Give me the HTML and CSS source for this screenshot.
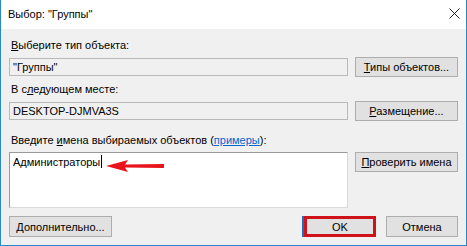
FILE: index.html
```html
<!DOCTYPE html>
<html lang="ru">
<head>
    <meta charset="UTF-8">
    <title>Выбор: "Группы"</title>
    <link rel="stylesheet" href="styles.css">
</head>
<body>
    <div class="window">
        <div class="titlebar">
            <span class="title">Выбор: "Группы"</span>
            <svg class="close" width="11" height="11" viewBox="0 0 11 11">
                <path d="M0.5 0.5 L10.5 10.5 M10.5 0.5 L0.5 10.5" stroke="#222" stroke-width="1" fill="none"/>
            </svg>
        </div>

        <div class="content">
            <div class="label"><u>В</u>ыберите тип объекта:</div>
            <div class="row first">
                <div class="field readonly">"Группы"</div>
                <button class="btn"><u>Т</u>ипы объектов...</button>
            </div>

            <div class="label">В с<u>л</u>едующем месте:</div>
            <div class="row">
                <div class="field readonly">DESKTOP-DJMVA3S</div>
                <button class="btn"><u>Р</u>азмещение...</button>
            </div>

            <div class="label">Введите <u>и</u>мена выбираемых объектов (<a href="#" class="link">примеры</a>):</div>
            <div class="row">
                <div class="field area">Администраторы<span class="caret"></span>
                    <svg class="arrow" width="62" height="16" viewBox="0 0 62 16">
                        <path d="M2 8 L24 2 L21 6.5 L60 6 L60 10 L21 9.5 L24 14 Z" fill="#e8141b"/>
                    </svg>
                </div>
                <button class="btn"><u>П</u>роверить имена</button>
            </div>

            <div class="footer">
                <button class="btn wide"><u>Д</u>ополнительно...</button>
                <div class="footer-right">
                    <button class="btn ok">OK</button>
                    <button class="btn">Отмена</button>
                </div>
            </div>
        </div>
    </div>
</body>
</html>
```

FILE: styles.css
```css
* {
    margin: 0;
    padding: 0;
    box-sizing: border-box;
}

body {
    width: 467px;
    height: 246px;
    overflow: hidden;
    font-family: 'Liberation Sans', Arial, sans-serif;
    font-size: 11px;
    color: #000;
    background: #f0f0f0;
}

.window {
    width: 467px;
    height: 246px;
    border: 1px solid #2b88c8;
    border-top: none;
    background: #f0f0f0;
    display: flex;
    flex-direction: column;
}

.titlebar {
    height: 29px;
    background: #fff;
    display: flex;
    align-items: center;
    justify-content: space-between;
    padding: 0 6px 2px 7px;
}

.title {
    font-size: 11px;
}

.content {
    padding: 7px 8px 0 8px;
    display: flex;
    flex-direction: column;
}

.label {
    height: 16px;
    line-height: 16px;
    margin-top: 1px;
    margin-bottom: 4px;
    padding-left: 2px;
    white-space: nowrap;
}

.label u, .btn u {
    text-decoration: underline;
    text-underline-offset: 1px;
}

.link {
    color: #0066cc;
}

.row {
    display: flex;
    justify-content: space-between;
    align-items: flex-start;
    margin-bottom: 10px;
}

.row.first {
    margin-bottom: 3px;
}

.field {
    width: 339px;
    height: 18px;
    border: 1px solid #a0a0a0;
    padding: 0 3px;
    line-height: 16px;
    white-space: nowrap;
}

.readonly {
    background: #f0f0f0;
    border-color: #b9b9b9;
    margin-top: 1px;
}

.area {
    height: 56px;
    background: #fff;
    border-color: #9a9a9a #d9d9d9 #d9d9d9 #9a9a9a;
    position: relative;
    padding-top: 1px;
}

.caret {
    display: inline-block;
    width: 1px;
    height: 13px;
    background: #000;
    vertical-align: -2px;
    margin-left: 1px;
}

.arrow {
    position: absolute;
    left: 94px;
    top: 5px;
}

.btn {
    width: 103px;
    height: 20px;
    background: #e1e1e1;
    border: 1px solid #adadad;
    font-family: inherit;
    font-size: 11px;
    color: #000;
    line-height: 16px;
    white-space: nowrap;
}

.footer {
    display: flex;
    justify-content: space-between;
    align-items: center;
    margin-top: -2px;
}

.footer .btn {
    height: 21px;
}

.footer-right {
    display: flex;
    gap: 10px;
}

.footer-right .btn {
    width: 72px;
}

.btn.ok {
    border: 3px solid #d0121b;
    box-shadow: -2px 0 0 #1a6fc4;
}
```
